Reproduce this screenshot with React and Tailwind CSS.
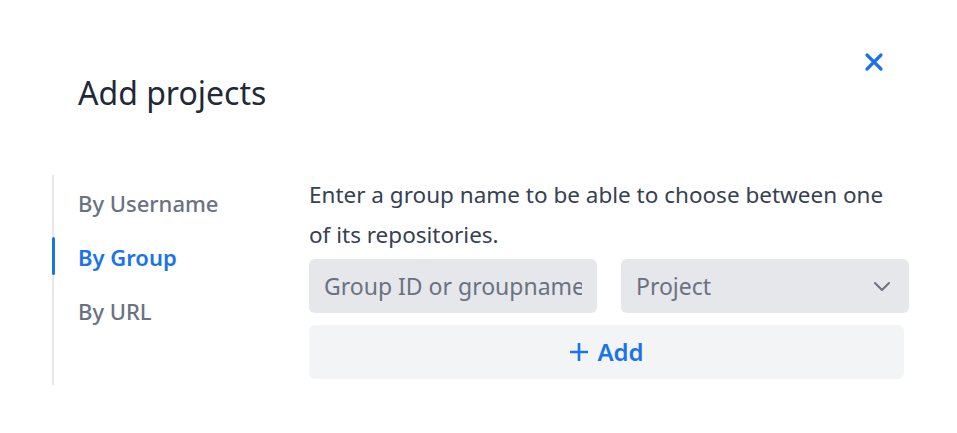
import React, { useState } from 'react';

const TABS = ['By Username', 'By Group', 'By URL'];

function App() {
  const [tab, setTab] = useState('By Group');

  return (
    <div className="relative w-[957px] h-[433px] bg-white" style={{ fontFamily: '"Noto Sans", "Open Sans", sans-serif' }}>
      <button type="button" className="absolute left-[862px] top-[50px] w-6 h-6 flex items-center justify-center text-[#1a73e8]">
        <svg width="22" height="22" viewBox="0 0 22 22" fill="none" stroke="currentColor" strokeWidth="3.2" strokeLinecap="round">
          <path d="M4 4L18 18M18 4L4 18" />
        </svg>
      </button>

      <div className="pt-[74px] pl-[78px]">
        <h2 className="text-[32px] leading-[38px] font-normal text-[#1f2937]">Add projects</h2>
      </div>

      <div className="flex mt-[63px] ml-[52px]">
        <nav className="w-[257px] h-[210px] border-l-2 border-gray-200 flex flex-col">
          {TABS.map(t => (
            <button
              key={t}
              type="button"
              onClick={() => setTab(t)}
              className={
                t === tab
                  ? 'relative h-[54px] pl-6 pt-[3px] text-left text-[22px] font-semibold text-[#1a73e8]'
                  : 'h-[54px] pl-6 pt-[3px] text-left text-[22px] font-medium text-gray-500'
              }
            >
              {t === tab && <span className="absolute -left-[2px] top-[8px] w-[3px] h-[38px] bg-[#1a73e8] rounded-sm" />}
              {t}
            </button>
          ))}
        </nav>

        <div className="w-[600px]">
          <p className="max-w-[590px] text-[22.5px] leading-[40px] text-gray-700">
            Enter a group name to be able to choose between one of its repositories.
          </p>
          <div className="flex gap-6 mt-[4px]">
            <input
              className="w-[288px] h-[54px] rounded-md bg-gray-200 px-[15px] text-[23px] text-gray-700 placeholder:text-gray-500 outline-none"
              placeholder="Group ID or groupname"
            />
            <div className="relative w-[288px] h-[54px] rounded-md bg-gray-200 flex items-center px-[15px]">
              <span className="text-[23px] text-gray-500">Project</span>
              <svg className="absolute right-[18px] top-[21px]" width="18" height="12" viewBox="0 0 18 12" fill="none" stroke="#6b7280" strokeWidth="2" strokeLinecap="round" strokeLinejoin="round">
                <path d="M2 3l7 7 7-7" />
              </svg>
            </div>
          </div>
          <button type="button" className="mt-3 w-[595px] h-[54px] rounded-md bg-gray-100 flex items-center justify-center gap-2 text-[24px] font-semibold text-[#1a73e8]">
            <svg width="20" height="20" viewBox="0 0 20 20" fill="none" stroke="currentColor" strokeWidth="2.6">
              <path d="M10 1v18M1 10h18" />
            </svg>
            Add
          </button>
        </div>
      </div>
    </div>
  );
}

export default App;
